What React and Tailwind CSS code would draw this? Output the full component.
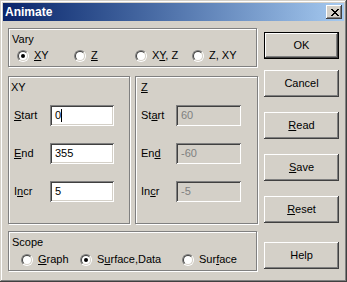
import React from 'react';

const raised =
  'shadow-[inset_-1px_-1px_#404040,inset_1px_1px_#ffffff,inset_-2px_-2px_#808080,inset_2px_2px_#d4d0c8]';
const sunken =
  'shadow-[inset_1px_1px_#808080,inset_-1px_-1px_#ffffff,inset_2px_2px_#404040,inset_-2px_-2px_#d4d0c8]';
const etched = 'border border-[#808080] shadow-[1px_1px_0_#ffffff,inset_1px_1px_0_#ffffff]';

const U = ({ children }) => <span className="underline underline-offset-[1px]">{children}</span>;

const Radio = ({ checked }) => (
  <span className="relative block w-[12px] h-[12px] rounded-full shrink-0 border border-t-[#808080] border-l-[#808080] border-b-white border-r-white">
    <span className="absolute inset-0 rounded-full bg-white border border-t-[#404040] border-l-[#404040] border-b-[#d4d0c8] border-r-[#d4d0c8] flex items-center justify-center">
      {checked && <span className="block w-[4px] h-[4px] rounded-full bg-black" />}
    </span>
  </span>
);

const RadioItem = ({ checked, width, children }) => (
  <div className={`flex items-center gap-[5px] shrink-0 ${width}`}>
    <Radio checked={checked} />
    <span className="leading-[13px]">{children}</span>
  </div>
);

const Field = ({ label, value, disabled, width, labelWidth, caret, className = '' }) => (
  <div className={`flex items-center ${className}`}>
    <span className={`${labelWidth} leading-[13px]`}>{label}</span>
    <div
      className={`${width} h-[21px] ${sunken} ${disabled ? 'bg-[#d4d0c8] text-[#808080]' : 'bg-white text-black'} flex items-center pl-[5px]`}
    >
      <span className="leading-[13px]">{value}</span>
      {caret && <span className="block w-px h-[13px] bg-black" />}
    </div>
  </div>
);

const Button = ({ children, isDefault, className = '' }) => (
  <div
    className={`w-[75px] h-[27px] ${isDefault ? 'border border-black' : ''} ${className}`}
  >
    <div className={`w-full h-full ${raised} flex items-center justify-center leading-[13px]`}>
      {children}
    </div>
  </div>
);

const CloseGlyph = () => (
  <svg width="8" height="7" viewBox="0 0 8 7" shapeRendering="crispEdges">
    <path
      fill="#000"
      d="M0 0h2v1H0zM6 0h2v1H6zM1 1h2v1H1zM5 1h2v1H5zM2 2h4v1H2zM3 3h2v1H3zM2 4h4v1H2zM1 5h2v1H1zM5 5h2v1H5zM0 6h2v1H0zM6 6h2v1H6z"
    />
  </svg>
);

export default function App() {
  return (
    <div
      className={`w-[347px] h-[282px] bg-[#d4d0c8] p-[3px] flex flex-col text-[11px] text-black font-['Liberation_Sans',Arial,sans-serif] shadow-[inset_-1px_-1px_#404040,inset_1px_1px_#d4d0c8,inset_-2px_-2px_#808080,inset_2px_2px_#ffffff]`}
    >
      {/* title bar */}
      <div className="h-[18px] bg-gradient-to-r from-[#0a246a] to-[#a6caf0] flex items-center justify-between pl-[2px] pr-[2px]">
        <span className="text-white font-bold text-[12px] leading-[14px]">Animate</span>
        <div className={`w-[16px] h-[14px] bg-[#d4d0c8] ${raised} flex items-center justify-center pl-px`}>
          <CloseGlyph />
        </div>
      </div>

      <div className="flex pl-[5px] pt-[7px]">
        {/* left column */}
        <div className="w-[250px] flex flex-col">
          <div className={`w-[249px] h-[39px] ${etched} pl-[3px] pt-[4px]`}>
            <div className="leading-[13px]">Vary</div>
            <div className="flex mt-[3px] ml-[5px]">
              <RadioItem checked width="w-[57px]">
                <U>X</U>Y
              </RadioItem>
              <RadioItem width="w-[61px]">
                <U>Z</U>
              </RadioItem>
              <RadioItem width="w-[57px]">
                X<U>Y</U>, Z
              </RadioItem>
              <RadioItem width="w-[50px]">Z, XY</RadioItem>
            </div>
          </div>

          <div className="flex mt-[9px]">
            <div className={`w-[122px] h-[148px] ${etched} pt-[4px]`}>
              <div className="leading-[13px] pl-[2px]">XY</div>
              <div className="pl-[5px]">
                <Field
                  className="mt-[11px]"
                  labelWidth="w-[36px]"
                  width="w-[64px]"
                  label={<><U>S</U>tart</>}
                  value="0"
                  caret
                />
                <Field
                  className="mt-[17px]"
                  labelWidth="w-[36px]"
                  width="w-[64px]"
                  label={<><U>E</U>nd</>}
                  value="355"
                />
                <Field
                  className="mt-[17px]"
                  labelWidth="w-[36px]"
                  width="w-[64px]"
                  label={<>I<U>n</U>cr</>}
                  value="5"
                />
              </div>
            </div>
            <div className={`w-[123px] h-[148px] ml-[5px] ${etched} pt-[4px] pl-[5px]`}>
              <div className="leading-[13px]">
                <U>Z</U>
              </div>
              <Field
                className="mt-[11px]"
                labelWidth="w-[35px]"
                width="w-[65px]"
                label={<>St<U>a</U>rt</>}
                value="60"
                disabled
              />
              <Field
                className="mt-[17px]"
                labelWidth="w-[35px]"
                width="w-[65px]"
                label={<>En<U>d</U></>}
                value="-60"
                disabled
              />
              <Field
                className="mt-[17px]"
                labelWidth="w-[35px]"
                width="w-[65px]"
                label={<>In<U>c</U>r</>}
                value="-5"
                disabled
              />
            </div>
          </div>

          <div className={`w-[249px] h-[40px] mt-[7px] ${etched} pl-[3px] pt-[4px]`}>
            <div className="leading-[13px]">Scope</div>
            <div className="flex mt-[4px] ml-[9px]">
              <RadioItem width="w-[59px]">
                <U>G</U>raph
              </RadioItem>
              <RadioItem checked width="w-[102px]">
                S<U>u</U>rface,Data
              </RadioItem>
              <RadioItem width="w-[60px]">
                Sur<U>f</U>ace
              </RadioItem>
            </div>
          </div>
        </div>

        {/* right column */}
        <div className="ml-[6px] flex flex-col">
          <Button isDefault className="mt-[4px]">OK</Button>
          <Button className="mt-[11px]">Cancel</Button>
          <Button className="mt-[15px]">
            <U>R</U>ead
          </Button>
          <Button className="mt-[15px]">
            <U>S</U>ave
          </Button>
          <Button className="mt-[15px]">
            <U>R</U>eset
          </Button>
          <Button className="mt-[19px]">Help</Button>
        </div>
      </div>
    </div>
  );
}
